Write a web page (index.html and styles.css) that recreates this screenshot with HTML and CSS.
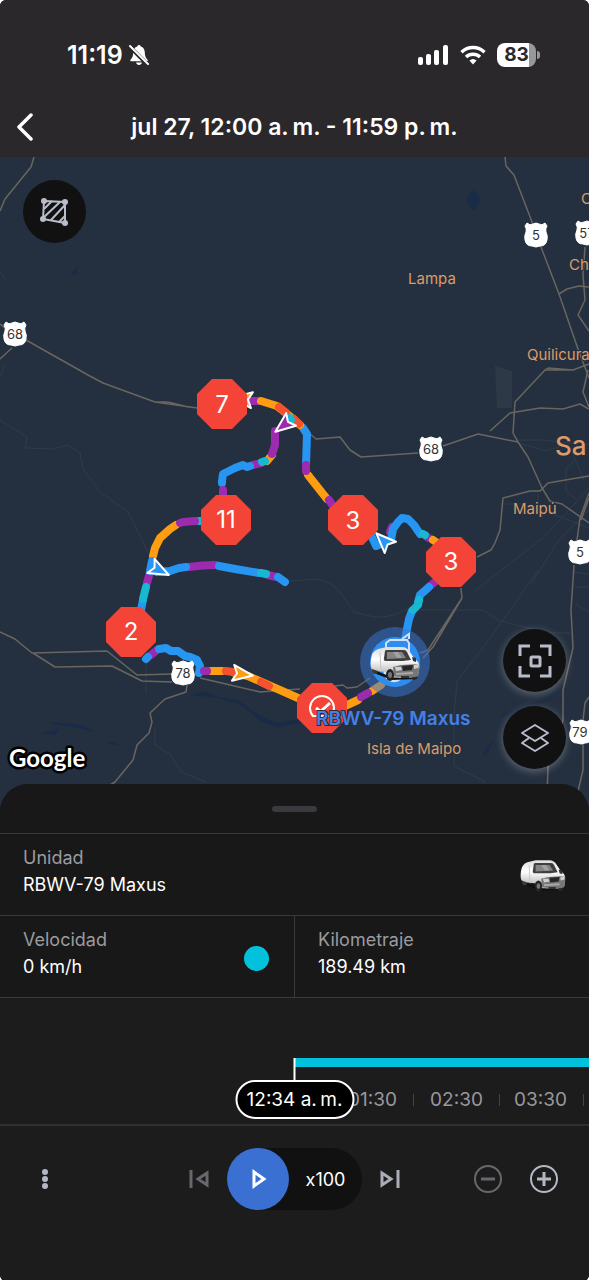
FILE: index.html
```html
<!DOCTYPE html>
<html lang="es">
<head>
    <meta charset="UTF-8">
    <meta name="viewport" content="width=device-width, initial-scale=1.0">
    <title>Recorrido RBWV-79 Maxus</title>
    <link rel="stylesheet" href="styles.css">
</head>
<body>
    <div class="app">
        <header class="header">
            <div class="status-bar">
                <div class="status-left">
                    <span class="clock">11:19</span>
                    <svg width="20" height="22" viewBox="0 0 20 22">
                        <path d="M10 1c.9 0 1.600.6 1.800 1.500 2.700.8 3.900 3 4 6 .1 3.500.8 5.200 2.700 7.300.5.700.3 1.500-.6 1.500H2.100c-.9 0-1.100-.8-.6-1.500C3.400 13.700 4.100 12 4.200 8.500c.1-3 1.300-5.200 4-6C8.400 1.600 9.100 1 10 1zM7 18.600h6c-.4 1.500-1.500 2.400-3 2.400s-2.600-.9-3-2.400z" fill="#fff"/>
                        <path d="M1 3l18 18" stroke="#2a282b" stroke-width="4"/>
                        <path d="M1 2l18 18" stroke="#fff" stroke-width="2" stroke-linecap="round"/>
                    </svg>
                </div>
                <div class="status-right">
                    <svg width="31" height="20" viewBox="0 0 31 20" fill="#fff">
                        <rect x="0" y="12" width="5" height="8" rx="2"/>
                        <rect x="8" y="9" width="5" height="11" rx="2"/>
                        <rect x="16" y="5" width="5" height="15" rx="2"/>
                        <rect x="25" y="0" width="5" height="20" rx="2"/>
                    </svg>
                    <svg width="26" height="20" viewBox="0 0 26 20" fill="none" stroke="#fff" stroke-width="3.400">
                        <path d="M1.500 7.200a16.500 16.500 0 0 1 23 0"/>
                        <path d="M6 12a10.200 10.200 0 0 1 14 0"/>
                        <path d="M13 19.500l-3.600-4a5.400 5.400 0 0 1 7.200 0z" fill="#fff" stroke="none"/>
                    </svg>
                    <div class="battery">83</div>
                </div>
            </div>
            <div class="title-bar">
                <button class="back" aria-label="Volver">
                    <svg width="18" height="28" viewBox="0 0 18 28"><path d="M15 2L3 14l12 12" fill="none" stroke="#fff" stroke-width="3.500" stroke-linecap="round" stroke-linejoin="round"/></svg>
                </button>
                <h1>jul 27, 12:00 a.&thinsp;m. - 11:59 p.&thinsp;m.</h1>
            </div>
        </header>

        <main class="map">
            <svg class="map-canvas" viewBox="0 157 589 655" preserveAspectRatio="xMidYMid slice">
                <defs>
                    <linearGradient id="vanBody" x1="0" y1="0" x2="0" y2="1">
                        <stop offset="0" stop-color="#dcdcdc"/>
                        <stop offset=".4" stop-color="#fff"/>
                        <stop offset="1" stop-color="#a5a5a5"/>
                    </linearGradient>
                    <symbol id="van" viewBox="0 0 50 34">
                        <path d="M2 22l12 5 10 4 24-1-2 2-24 1L4 26z" fill="#111"/>
                        <ellipse cx="5" cy="23" rx="3" ry="4" fill="#3a3a3a"/>
                        <ellipse cx="44" cy="29" rx="3" ry="4" fill="#2c2c2c"/>
                        <path d="M1 12Q2 4 8 2l9-2h15q5 0 8 5l4 6 4 4q2 3 1 8l-1 6-10 2-16-1-6-5-8-1-6-2Q0 20 1 12z" fill="url(#vanBody)"/>
                        <path d="M15 4q0-1 2-1h17q2 0 3 2l4 8-8 1H15q-2-1-1-3z" fill="#3f3f3f"/>
                        <path d="M17 5h15l4 6-19 1z" fill="#858585"/>
                        <path d="M23 5h5l4 6h-5z" fill="#a2a2a2"/>
                        <path d="M42 10l4 1v4l-3-1z" fill="#333"/>
                        <path d="M10 5l1 20" stroke="#c6c6c6" stroke-width="1" fill="none"/>
                        <path d="M23 20l8-2 17-1 1 6-1 6-9 2-15-2z" fill="#777"/>
                        <path d="M32 19l11-1-1 5-9 1z" fill="#262626"/>
                        <path d="M25 20l6 0 1 3-6 1zM44 18l4-1v4l-4 1z" fill="#cfcfcf"/>
                        <path d="M26 27l17-1" stroke="#aaa" stroke-width="2"/>
                        <path d="M31 30l8 0" stroke="#333" stroke-width="2"/>
                        <ellipse cx="20" cy="28" rx="4" ry="6" fill="#242424"/>
                        <ellipse cx="20" cy="28" rx="2" ry="3" fill="#777"/>
                    </symbol>
                    <path id="octagon" d="M-10-25h20l15 15v20l-15 15h-20l-15-15v-20z" fill="#f44438"/>
                    <path id="shield" d="M-9-12Q-6-9-3-11L0-12 3-11Q6-9 9-12L11-9Q9-6 10-3 12 1 11 5 10 11 4 11L0 12-4 11Q-10 11-11 5-12 1-10-3-9-6-11-9z" fill="#fff" stroke="#fff" stroke-width="1" stroke-linejoin="round"/>
                    <path id="arrow" d="M-9-8L11 0-9 8l4-8z" stroke="#fff" stroke-width="2" stroke-linejoin="round"/>
                </defs>

                <rect x="0" y="157" width="589" height="655" fill="#24303f"/>

                <!-- agua -->
                <g fill="#1a2b47">
                    <path d="M468 195l4-5 6 4 2 7-4 8-4 1-5-8z"/>
                    <path d="M72 272l6-6-1 8-5 1z"/>
                    <path d="M190 695l13-4 15 6 20 3 18 13 20 10 30-5v4l-29 5-16-5-18-16-24-8z"/>
                    <path d="M53 722l30 3 10 7-16-4-24-4zM40 733l20-4-5 6z"/>
                    <path d="M107 743l5-2 10 5z"/>
                    <path d="M483 753l6-8 5-6-5 12-5 5z"/>
                    <path d="M500 714l40-14 22-13v4l-22 14-40 13z" opacity=".6"/>
                </g>
                <path d="M495 365l3 2 14 4v37h-15z" fill="#2e3947"/>

                <g class="minor-road">
                    <path d="M0 420l27 17-2 11 28 1 15-4 12 8 3 16 17 23 28 20 20 40"/>
                    <path d="M290 581l28-2q16 4 22 13l14 20 20 5q18 1 30-7h78l18 11 50 12 20 0"/>
                    <path d="M538 570l-27 39-34 47-20 25-3 35v50l30 15 20 35"/>
                    <path d="M589 488l-44 48-70 55M589 510l-30 30-28 44"/>
                    <path d="M517 440h24l48 5M518 443l28 8 25-8M538 494v14l51 20M500 504h22"/>
                    <path d="M575 460l-9 9v22l10 8M571 450l13 30"/>
                    <path d="M146 657v36M155 728v17l16 10 10 17 25 10M0 272l6 8M0 377l5-12"/>
                    <path d="M573 572l16 2M575 587h14M575 604l14 8"/>
                </g>
                <g class="road">
                    <path d="M34 157l-3 10-26 32-5 12"/>
                    <path d="M0 324l5 4M0 359l12-11M26 340l62 35 15 8 52 19 42 6M155 402l13 0 20 5"/>
                    <path d="M505 157l1 9 8 9 18 47 9 25 18 47 19 55 11 29"/>
                    <path d="M585 247l-2 28 2 25-7 15 11 16M559 294l8-5 12-3 10 1"/>
                    <path d="M574 370h-29M589 364l-16 6-25-2-3 2-30 32-2 31 5 9 10 15 14 31 8 13 12 3 27 19"/>
                    <path d="M490 431l20-18 30-5 23 1 17-5 9 5M588 370l-5 22 6 15"/>
                    <path d="M310 434l6 5 24-2 10 13 11 7 57-4M443 446l35-12 40 8"/>
                    <path d="M589 476l-41 7-8 8h-10l-27 7-3 32-5 13-4 7-14 7"/>
                    <path d="M589 493l-9 25-3 22M589 498l-8 22M574 565l-3 45 2 38-10 42v30l-15 47-1 30"/>
                    <path d="M589 697l-4 6-2 17v50l-7 30"/>
                    <path d="M461 588l1 10-34 52-8 3M462 598l-29 49-10 11M370 678l-13 9-10 1-4-3-16 2"/>
                    <path d="M0 632l15 7 17 14 75-2 30 24 35-1M33 653l22 14 57-1 30 15 30 1M200 678l60 14 40-3"/>
                    <path d="M187 685l-1 7-21 7-15 14 2 9-3 11-12 12-4 15-18 22-10 6"/>
                </g>

                <!-- recorrido, coloreado por velocidad -->
                <g class="route">
                    <path class="purple" d="M251 401h8"/>
                    <path class="blue" d="M303 428l4 6-1 31"/>
                    <path class="orange" d="M261 401l16 5 9 7 14 12"/>
                    <path class="red" d="M279 407l7 6M294 419l5 5"/>
                    <path class="cyan" d="M290 418l1 2"/>
                    <path class="orange" d="M308 475l19 24"/>
                    <path class="purple" d="M306 465v6M329 500l4 6"/>

                    <path class="orange" d="M272 455l-5 6"/>
                    <path class="purple" d="M275 431v14l-3 9M261 463l-8 2"/>
                    <path class="cyan" d="M265 461l-3 1"/>
                    <path class="blue" d="M250 466l-3 1-4-2-8 3-12 6-1 7v2"/>
                    <path class="purple" d="M223 490v8"/>

                    <path class="cyan" d="M204 521h-5"/>
                    <path class="orange" d="M176 525l-6 4-10 9-5 10-2 8"/>
                    <path class="purple" d="M195 521l-12 1-3 1"/>
                    <path class="purple" d="M150 572l-3 11"/>
                    <path class="blue" d="M152 561l-2 10"/>
                    <path class="blue" d="M143 600l-2 10"/>
                    <path class="cyan" d="M146 587l-3 12"/>
                    <path class="purple" d="M189 567q14-2 27-2M268 575l8 2"/>
                    <path class="blue" d="M157 572l13-1 9-3 7-1M219 566l16 3 24 4M278 577l7 5"/>
                    <path class="cyan" d="M261 573l5 1"/>

                    <path class="purple" d="M151 655l6-5"/>
                    <path class="blue" d="M146 659l2-2M159 649l7-1 5 3 7 0 7 5 5 1 7 3 3 6-1 7"/>
                    <path class="orange" d="M211 671l11 0M235 673l13 3 50 22"/>
                    <path class="purple" d="M204 671h3"/>
                    <path class="red" d="M226 671l7 1M261 682l8 4"/>

                    <path class="orange" d="M345 706l13-6M372 691l9-6"/>
                    <path class="purple" d="M361 697l7-4"/>

                    <path class="purple" d="M436 581l-6 5"/>
                    <path class="blue" d="M429 587l-9 8-2 7M412 611l-3 8-4 20"/>
                    <path class="cyan" d="M419 600l-1 5-5 5"/>

                    <path class="purple" d="M390 532l2-5M427 537l4 2"/>
                    <path class="blue" d="M372 537l4 9 7-3 8-3 2-11 5-7 4-4 6 1 6 6 6 9"/>
                    <path class="cyan" d="M423 534l2 1"/>
                    <path class="orange" d="M433 540l6 4"/>
                </g>

                <use href="#arrow" fill="#ff9d12" transform="translate(243 399) rotate(187)"/>
                <use href="#arrow" fill="#9c2bb0" transform="translate(284 425) rotate(142)"/>
                <use href="#arrow" fill="#2795f2" transform="translate(159 570) rotate(27)"/>
                <use href="#arrow" fill="#2795f2" transform="translate(384 541) rotate(225)"/>
                <use href="#arrow" fill="#ff9d12" transform="translate(242 674) rotate(8)"/>

                <g class="place">
                    <text x="408" y="284">Lampa</text>
                    <text x="581" y="204">C</text>
                    <text x="569" y="270">Ch</text>
                    <text x="527" y="360">Quilicura</text>
                    <text x="513" y="514">Maipú</text>
                    <text x="367" y="754">Isla de Maipo</text>
                    <text class="city" x="555" y="455">Sa</text>
                </g>

                <g class="shield">
                    <use href="#shield" x="15" y="334"/><text x="15" y="339">68</text>
                    <use href="#shield" x="536" y="235"/><text x="536" y="240">5</text>
                    <use href="#shield" x="587" y="233"/><text x="587" y="238">57</text>
                    <use href="#shield" x="431" y="449"/><text x="431" y="454">68</text>
                    <use href="#shield" x="580" y="552"/><text x="580" y="557">5</text>
                    <use href="#shield" x="183" y="673"/><text x="183" y="678">78</text>
                    <use href="#shield" x="581" y="732"/><text x="580" y="737">79</text>
                </g>

                <g class="stop">
                    <use href="#octagon" x="222" y="404"/><text x="222" y="413">7</text>
                    <use href="#octagon" x="226" y="520"/><text x="226" y="528">11</text>
                    <use href="#octagon" x="353" y="520"/><text x="353" y="529">3</text>
                    <use href="#octagon" x="451" y="562"/><text x="451" y="570">3</text>
                    <use href="#octagon" x="131" y="632"/><text x="131" y="640">2</text>
                    <use href="#octagon" x="322" y="708"/>
                </g>
                <g fill="none" stroke="#fff" stroke-width="2">
                    <path d="M313 716a12 12 0 1 1 18 0z"/>
                    <path d="M321 711l9-8M316 708l4 3" stroke-width="3"/>
                </g>

                <circle cx="395" cy="662" r="35" fill="#3a77d8" opacity=".5"/>
                <circle cx="395" cy="662" r="25" fill="#2f8df0"/>
                <path d="M386 654v-11l4-3h17l2 3v9M402 639l7-5v5" fill="none" stroke="#cfe2fb" stroke-width="2"/>
                <path d="M385 670a9 9 0 1 0 18 3" fill="none" stroke="#cfe2fb" stroke-width="3"/>
                <use href="#van" x="370" y="647" width="50" height="34"/>
                <text class="unit-label" x="316" y="725">RBWV-79 Maxus</text>

                <text class="google" x="9" y="767">Google</text>
            </svg>

            <button class="map-button zones" aria-label="Geocercas">
                <svg width="32" height="32" viewBox="0 0 32 32" fill="none" stroke="#b9bdcb" stroke-width="2">
                    <path d="M5 5l21 1 0 21-22-4z"/>
                    <path d="M5 13l8-8M4 22L21 6M12 24l14-15M20 26l6-6"/>
                    <g fill="#b9bdcb" stroke="none"><circle cx="5" cy="5" r="3"/><circle cx="26" cy="6" r="3"/><circle cx="4" cy="23" r="3"/><circle cx="26" cy="27" r="3"/></g>
                </svg>
            </button>
            <div class="map-tools">
                <button class="map-button glow" aria-label="Centrar unidad">
                    <svg width="34" height="34" viewBox="0 0 34 34" fill="none" stroke="#b9bdcb" stroke-width="3">
                        <path d="M2 12V2h10M22 2h10v10M32 22v10H22M12 32H2V22"/>
                        <rect x="13" y="13" width="9" height="9" rx="1"/>
                    </svg>
                </button>
                <button class="map-button glow" aria-label="Capas">
                    <svg width="30" height="30" viewBox="0 0 30 30" fill="none" stroke="#b9bdcb" stroke-width="2" stroke-linejoin="round">
                        <path d="M15 2l13 8-13 8-13-8z"/>
                        <path d="M9 15l-7 5 13 8 13-8-7-5"/>
                    </svg>
                </button>
            </div>
        </main>

        <section class="sheet">
            <div class="handle"></div>
            <div class="row">
                <div class="cell">
                    <div>
                        <div class="label">Unidad</div>
                        <div class="value">RBWV-79 Maxus</div>
                    </div>
                    <svg class="unit-icon" width="46" height="36"><use href="#van"/></svg>
                </div>
            </div>
            <div class="row">
                <div class="cell">
                    <div>
                        <div class="label">Velocidad</div>
                        <div class="value">0 km/h</div>
                    </div>
                    <span class="speed-dot"></span>
                </div>
                <div class="cell">
                    <div>
                        <div class="label">Kilometraje</div>
                        <div class="value">189.49 km</div>
                    </div>
                </div>
            </div>

            <div class="timeline">
                <div class="track"></div>
                <ul class="hours">
                    <li>01:30</li>
                    <li>02:30</li>
                    <li>03:30</li>
                </ul>
                <div class="cursor">
                    <div class="cursor-line"></div>
                    <div class="cursor-time">12:34 a.&thinsp;m.</div>
                </div>
            </div>

            <div class="controls">
                <div class="controls-side">
                    <button aria-label="Más opciones">
                        <svg width="28" height="28" viewBox="0 0 28 28" fill="#b4b8c4"><circle cx="14" cy="7" r="3"/><circle cx="14" cy="14" r="3"/><circle cx="14" cy="21" r="3"/></svg>
                    </button>
                </div>
                <div class="player">
                    <button aria-label="Anterior" disabled>
                        <svg width="24" height="24" viewBox="0 0 24 24" fill="none" stroke="#66686e" stroke-width="3"><path d="M4 3v18M20 6v12l-9-6z"/></svg>
                    </button>
                    <div class="player-pill">
                        <button class="play" aria-label="Reproducir">
                            <svg width="24" height="24" viewBox="0 0 24 24" fill="none" stroke="#fff" stroke-width="3"><path d="M8 5v14l10-7z"/></svg>
                        </button>
                        <button class="rate">x100</button>
                    </div>
                    <button aria-label="Siguiente">
                        <svg width="24" height="24" viewBox="0 0 24 24" fill="none" stroke="#a9adb9" stroke-width="3"><path d="M20 3v18M4 6v12l9-6z"/></svg>
                    </button>
                </div>
                <div class="controls-side right">
                    <button aria-label="Alejar" disabled>
                        <svg width="28" height="28" viewBox="0 0 28 28" fill="none" stroke="#66686e" stroke-width="2"><circle cx="14" cy="14" r="13"/><path d="M7 14h14" stroke-width="3"/></svg>
                    </button>
                    <button aria-label="Acercar">
                        <svg width="28" height="28" viewBox="0 0 28 28" fill="none" stroke="#b4b8c4" stroke-width="2"><circle cx="14" cy="14" r="13"/><path d="M7 14h14M14 7v14" stroke-width="3"/></svg>
                    </button>
                </div>
            </div>
        </section>
    </div>
</body>
</html>
```
FILE: styles.css
```css
* {
    box-sizing: border-box;
}

body {
    margin: 0;
    background: #fff;
    font-family: Inter, "Liberation Sans", sans-serif;
    color: #fff;
}

button {
    display: flex;
    align-items: center;
    justify-content: center;
    padding: 0;
    border: none;
    background: none;
    color: inherit;
    font: inherit;
    cursor: pointer;
}

svg {
    display: block;
}

.app {
    display: flex;
    flex-direction: column;
    min-height: 100vh;
    border-radius: 6px;
    overflow: hidden;
    background: #1c1c1c;
}

/* Encabezado */
.header {
    background: #2a282b;
}

.status-bar {
    display: flex;
    justify-content: space-between;
    align-items: center;
    height: 98px;
    padding: 11px 53px 0 67px;
}

.status-left {
    display: flex;
    align-items: center;
    gap: 6px;
}

.clock {
    font-size: 25px;
    font-weight: 600;
}

.status-right {
    display: flex;
    align-items: center;
    gap: 11px;
}

.battery {
    position: relative;
    width: 39px;
    height: 24px;
    border-radius: 8px;
    background: linear-gradient(90deg, #fff 83%, #98979a 83%);
    color: #2a282b;
    font-size: 19px;
    font-weight: 700;
    line-height: 24px;
    text-align: center;
}

.battery::after {
    content: "";
    position: absolute;
    right: -4px;
    top: 8px;
    width: 3px;
    height: 8px;
    border-radius: 0 3px 3px 0;
    background: #98979a;
}

.title-bar {
    display: grid;
    grid-template-columns: 18px 1fr 18px;
    align-items: center;
    height: 59px;
    padding: 0 16px 2px;
}

h1 {
    margin: 0;
    font-size: 23px;
    font-weight: 600;
    text-align: center;
    white-space: nowrap;
}

/* Mapa */
.map {
    position: relative;
    display: flex;
    flex: 1;
    background: #24303f;
}

.map-canvas {
    flex: 1;
    min-width: 0;
}

.road {
    fill: none;
    stroke: #6a655f;
    stroke-width: 1.5;
    stroke-linejoin: round;
}

.minor-road {
    fill: none;
    stroke: #303c4a;
    stroke-width: 1;
}

.route {
    fill: none;
    stroke-width: 8;
    stroke-linecap: round;
    stroke-linejoin: round;
}

.blue {
    stroke: #2795f2;
}

.cyan {
    stroke: #16b8d2;
}

.purple {
    stroke: #9c2bb0;
}

.orange {
    stroke: #ff9d12;
}

.red {
    stroke: #f6512e;
}

.place {
    fill: #dd9b69;
    stroke: #24303f;
    stroke-width: 2;
    paint-order: stroke;
    font-size: 15px;
}

.city {
    font-size: 26px;
    font-weight: 500;
}

.shield {
    fill: #333;
    font-size: 13px;
    text-anchor: middle;
}

.stop {
    fill: #fff;
    font-size: 24px;
    text-anchor: middle;
}

.unit-label {
    fill: #4580e6;
    stroke: #24303f;
    stroke-width: 2;
    paint-order: stroke;
    font-size: 19px;
    font-weight: 600;
}

.google {
    fill: #fff;
    stroke: #000;
    stroke-width: 5;
    stroke-linejoin: round;
    paint-order: stroke;
    font-family: Lato, sans-serif;
    font-size: 24px;
    font-weight: 700;
}

.map-button {
    width: 63px;
    height: 63px;
    border-radius: 50%;
    background: #111;
}

.map-button.glow {
    box-shadow: 0 2px 8px rgba(255, 255, 255, 0.3);
}

.zones {
    position: absolute;
    top: 23px;
    left: 23px;
}

.map-tools {
    position: absolute;
    right: 23px;
    bottom: 43px;
    display: flex;
    flex-direction: column;
    gap: 14px;
}

/* Panel inferior */
.sheet {
    position: relative;
    margin-top: -28px;
    border-radius: 28px 28px 0 0;
    background: #1c1c1c;
    overflow: hidden;
}

.handle {
    display: flex;
    justify-content: center;
    height: 49px;
    padding-top: 22px;
    background: #181818;
}

.handle::before {
    content: "";
    width: 45px;
    height: 6px;
    border-radius: 3px;
    background: #3a393d;
}

.row {
    display: flex;
    border-top: 1px solid #393939;
    background: #181818;
}

.cell {
    display: flex;
    flex: 1;
    align-items: center;
    justify-content: space-between;
    height: 81px;
    padding: 0 23px 7px;
}

.cell + .cell {
    border-left: 1px solid #393939;
}

.label,
.value {
    font-size: 18px;
    line-height: 27px;
}

.label {
    color: #9b9b9f;
}

.unit-icon,
.speed-dot {
    margin-top: 10px;
}

.speed-dot {
    width: 25px;
    height: 25px;
    margin-right: 2px;
    border-radius: 50%;
    background: #02c1dc;
}

/* Línea de tiempo */
.timeline {
    position: relative;
    height: 127px;
    padding-top: 60px;
    border-top: 1px solid #393939;
    overflow: hidden;
}

.track {
    height: 9px;
    margin-left: 50%;
    background: #02c1dc;
}

.hours {
    display: flex;
    margin: 21px 0 0 calc(50% + 36px);
    padding: 0;
    list-style: none;
    color: #98989c;
    font-size: 19px;
    line-height: 24px;
}

.hours li {
    display: flex;
    flex: 0 0 84px;
    align-items: center;
    justify-content: center;
}

.hours li::after {
    content: "";
    width: 1px;
    height: 12px;
    margin-right: -17px;
    margin-left: 16px;
    background: #444;
}

.cursor {
    position: absolute;
    top: 60px;
    left: 50%;
    display: flex;
    flex-direction: column;
    align-items: center;
    transform: translateX(-50%);
}

.cursor-line {
    width: 2px;
    height: 22px;
    background: #fff;
}

.cursor-time {
    width: 119px;
    height: 39px;
    border: 2px solid #fff;
    border-radius: 20px;
    background: #000;
    font-size: 19px;
    line-height: 35px;
    text-align: center;
    white-space: nowrap;
}

/* Controles de reproducción */
.controls {
    display: grid;
    grid-template-columns: 1fr auto 1fr;
    align-items: center;
    padding: 22px 31px 71px;
    border-top: 2px solid #303030;
}

.controls-side {
    display: flex;
    gap: 28px;
}

.controls-side.right {
    justify-content: flex-end;
}

.player {
    display: flex;
    align-items: center;
    gap: 16px;
}

.player-pill {
    display: flex;
    border-radius: 31px;
    background: #111;
}

.play {
    width: 62px;
    height: 62px;
    border-radius: 50%;
    background: #3a70d2;
}

.rate {
    width: 73px;
    font-size: 18px;
}
```
